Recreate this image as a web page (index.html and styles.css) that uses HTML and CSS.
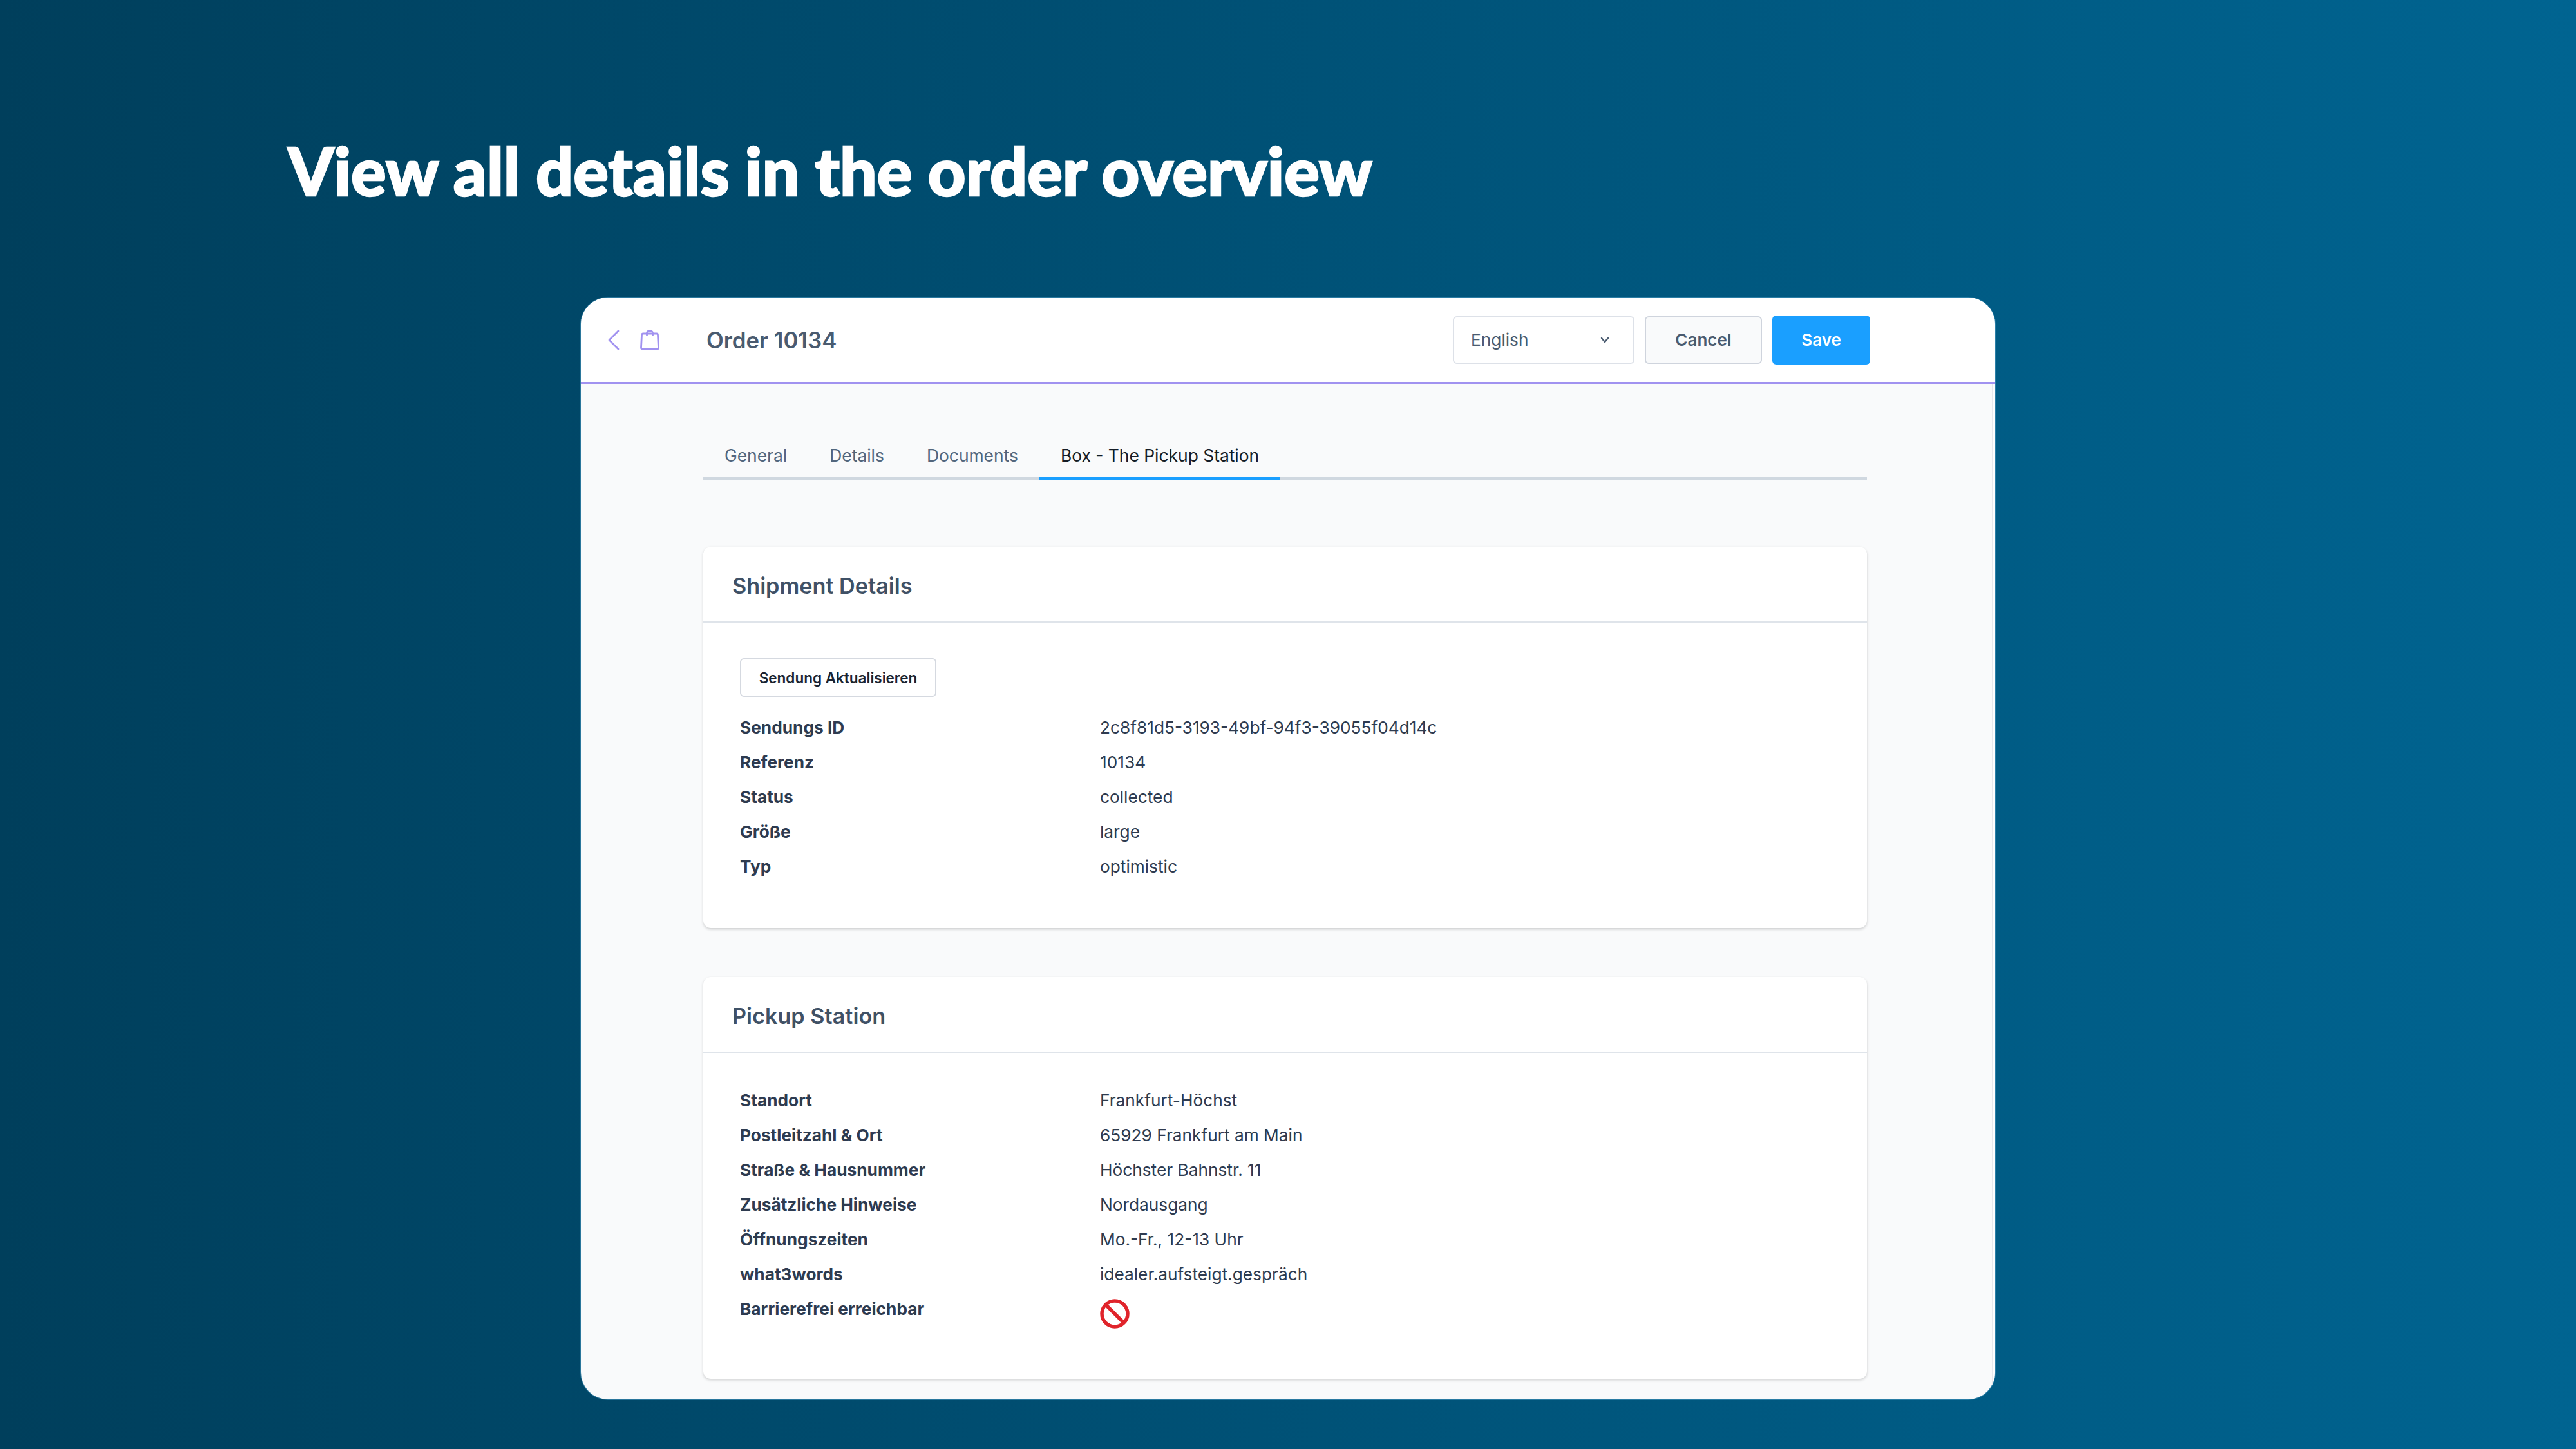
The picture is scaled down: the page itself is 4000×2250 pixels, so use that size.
FILE: index.html
```html
<!DOCTYPE html>
<html lang="en">
<head>
    <meta charset="UTF-8">
    <title>Order overview</title>
    <link rel="stylesheet" href="styles.css">
</head>
<body>

    <h1 class="headline">View all details in the order overview</h1>

    <div class="window">
        <div class="topbar">
            <svg class="icon-back" viewBox="0 0 18 32" fill="none" stroke="#a192f0" stroke-width="2.8" stroke-linecap="round" stroke-linejoin="round"><path d="M16 2 2 16l14 14"/></svg>
            <svg class="icon-bag" viewBox="0 0 30 32" fill="none" stroke="#a192f0" stroke-width="2.8" stroke-linecap="round" stroke-linejoin="round"><path d="M4.500 6h21a2 2 0 0 1 2 2l1 20a2.500 2.500 0 0 1-2.500 2.500H4A2.500 2.500 0 0 1 1.500 28l1-20a2 2 0 0 1 2-2Z"/><path d="M10.500 8.500V5a4.500 3.500 0 0 1 9 0v3.500"/></svg>
            <div class="order-title">Order 10134</div>
            <div class="lang-select">
                <span>English</span>
                <svg class="chevron" viewBox="0 0 16 16" fill="none" stroke="#4a5b70" stroke-width="2.4" stroke-linecap="round" stroke-linejoin="round"><path d="m3 5 5 6 5-6"/></svg>
            </div>
            <button class="btn btn-cancel">Cancel</button>
            <button class="btn btn-save">Save</button>
        </div>

        <div class="page">
            <div class="content">
                <div class="tabs">
                    <div class="tab">General</div>
                    <div class="tab">Details</div>
                    <div class="tab">Documents</div>
                    <div class="tab active">Box - The Pickup Station</div>
                </div>

                <div class="card card-shipment">
                    <div class="card-head">Shipment Details</div>
                    <div class="card-body">
                        <button class="btn-small">Sendung Aktualisieren</button>
                        <div class="rows">
                            <div class="label">Sendungs ID</div><div class="value">2c8f81d5-3193-49bf-94f3-39055f04d14c</div>
                            <div class="label">Referenz</div><div class="value">10134</div>
                            <div class="label">Status</div><div class="value">collected</div>
                            <div class="label">Größe</div><div class="value">large</div>
                            <div class="label">Typ</div><div class="value">optimistic</div>
                        </div>
                    </div>
                </div>

                <div class="card card-station">
                    <div class="card-head">Pickup Station</div>
                    <div class="card-body">
                        <div class="rows">
                            <div class="label">Standort</div><div class="value">Frankfurt-Höchst</div>
                            <div class="label">Postleitzahl &amp; Ort</div><div class="value">65929 Frankfurt am Main</div>
                            <div class="label">Straße &amp; Hausnummer</div><div class="value">Höchster Bahnstr. 11</div>
                            <div class="label">Zusätzliche Hinweise</div><div class="value">Nordausgang</div>
                            <div class="label">Öffnungszeiten</div><div class="value">Mo.-Fr., 12-13 Uhr</div>
                            <div class="label">what3words</div><div class="value">idealer.aufsteigt.gespräch</div>
                            <div class="label">Barrierefrei erreichbar</div>
                            <div class="value">
                                <svg class="icon-ban" viewBox="0 0 46 46" fill="none" stroke="#e0242b" stroke-width="5.5"><circle cx="23" cy="23" r="20"/><path d="M9 9l28 28"/></svg>
                            </div>
                        </div>
                    </div>
                </div>
            </div>
            <div class="scroll-track"></div>
        </div>
    </div>

</body>
</html>
```

FILE: styles.css
```css
html, body {
    margin: 0;
    height: 100%;
}
body {
    width: 4000px;
    height: 2250px;
    overflow: hidden;
    font-family: Inter, "Liberation Sans", sans-serif;
    background: linear-gradient(90deg, #003f5c 0%, #006491 100%);
}
.headline {
    margin: 0;
    padding: 200px 0 0 447px;
    height: 462px;
    box-sizing: border-box;
    font-family: Lato, sans-serif;
    font-weight: 900;
    font-size: 102px;
    line-height: 130px;
    color: #fff;
    -webkit-text-stroke: 2.5px #fff;
}
.window {
    margin-left: 902px;
    width: 2196px;
    height: 1711px;
    border-radius: 42px;
    overflow: hidden;
    background: #f9fafb;
    box-shadow: 0 0 0 1px rgba(70, 150, 190, 0.6);
}
.topbar {
    height: 131px;
    display: flex;
    align-items: center;
    background: #fff;
    border-bottom: 3px solid #a192f0;
    padding-left: 42px;
    padding-right: 194px;
}
.icon-back {
    width: 18px;
    height: 32px;
}
.icon-bag {
    width: 30px;
    height: 32px;
    margin-left: 32px;
}
.order-title {
    margin-left: 73px;
    font-size: 34.8px;
    font-weight: 600;
    color: #4a5b70;
    flex: 1;
}
.lang-select {
    width: 282px;
    height: 74px;
    box-sizing: border-box;
    display: flex;
    align-items: center;
    justify-content: space-between;
    padding: 0 36px 0 26px;
    border: 2px solid #dde1e8;
    border-radius: 6px;
    font-size: 26.25px;
    color: #4a5b70;
}
.chevron {
    width: 16px;
    height: 16px;
}
.btn {
    height: 74px;
    box-sizing: border-box;
    border-radius: 6px;
    font-family: inherit;
    font-size: 26px;
    font-weight: 600;
}
.btn-cancel {
    width: 182px;
    margin-left: 16px;
    border: 2px solid #cfd4dd;
    background: #f9fafb;
    color: #4a5b70;
}
.btn-save {
    width: 152px;
    height: 76px;
    margin-left: 16px;
    border: none;
    background: #1a9fff;
    color: #fff;
}
.page {
    display: flex;
    height: 1577px;
}
.content {
    flex: 1;
    padding: 0 194px 0 190px;
}
.scroll-track {
    width: 3px;
    border-left: 2px solid #e6e8ec;
    background: #fdfdfe;
}
.tabs {
    display: flex;
    height: 149px;
    box-sizing: border-box;
    padding-top: 87px;
    border-bottom: 4px solid #d0d8e0;
}
.tab {
    height: 58px;
    padding: 0 33px;
    font-size: 26.4px;
    line-height: 48px;
    color: #52667d;
}
.tab.active {
    color: #141c26;
    border-bottom: 4px solid #1a9fff;
}
.card {
    background: #fff;
    border-radius: 12px;
    box-shadow: 0 2px 4px rgba(0, 0, 0, 0.18);
}
.card-shipment {
    margin-top: 104px;
    height: 592px;
}
.card-station {
    margin-top: 76px;
    height: 624px;
}
.card-head {
    height: 118px;
    box-sizing: border-box;
    padding-left: 45px;
    border-bottom: 2px solid #dfe4ea;
    font-size: 34.2px;
    font-weight: 600;
    line-height: 121px;
    color: #3f5166;
}
.card-body {
    padding: 0 57px;
}
.btn-small {
    display: block;
    margin-top: 55px;
    width: 305px;
    height: 60px;
    padding: 0;
    border: 2px solid #d5d9e0;
    border-radius: 6px;
    background: #fff;
    font-family: inherit;
    font-size: 22.5px;
    font-weight: 600;
    color: #1a2330;
}
.rows {
    display: grid;
    grid-template-columns: 559px 1fr;
    grid-auto-rows: 54px;
    font-size: 26.25px;
    line-height: 54px;
    color: #2e3b50;
}
.card-shipment .rows {
    margin-top: 21px;
}
.card-station .rows {
    padding-top: 47px;
}
.label {
    font-weight: 700;
}
.icon-ban {
    display: block;
    width: 46px;
    height: 46px;
    margin-top: 11px;
}
```
